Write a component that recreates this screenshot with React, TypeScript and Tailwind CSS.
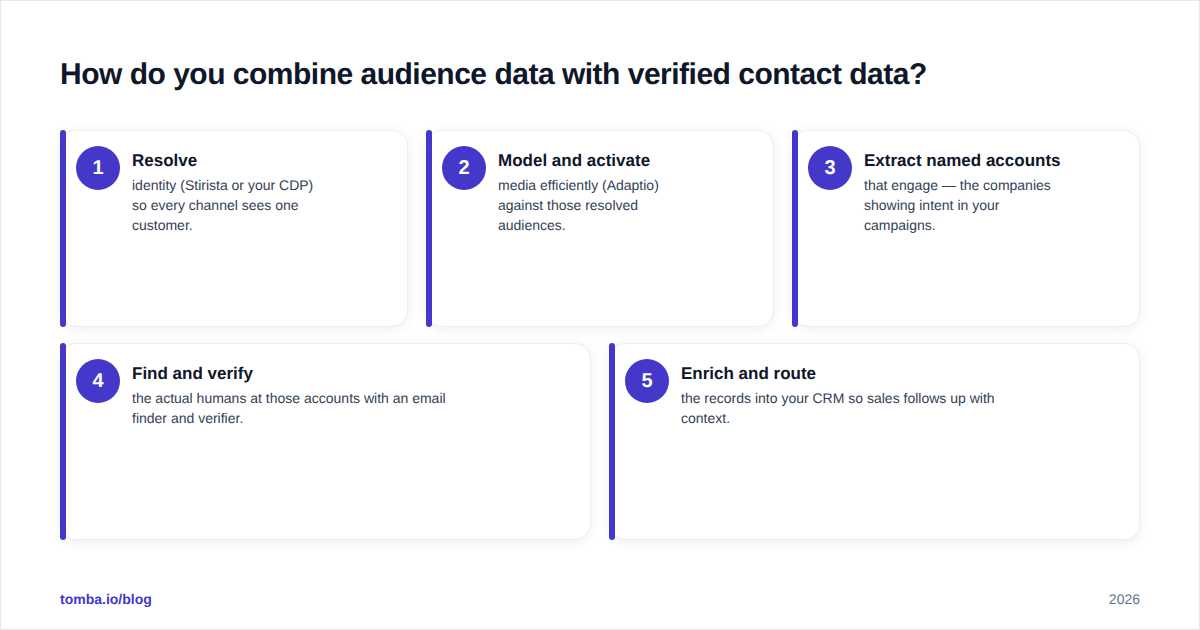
const steps = [
  { n: 1, title: 'Resolve', text: 'identity (Stirista or your CDP) so every channel sees one customer.' },
  { n: 2, title: 'Model and activate', text: 'media efficiently (Adaptio) against those resolved audiences.' },
  { n: 3, title: 'Extract named accounts', text: 'that engage — the companies showing intent in your campaigns.' },
  { n: 4, title: 'Find and verify', text: 'the actual humans at those accounts with an email finder and verifier.' },
  { n: 5, title: 'Enrich and route', text: 'the records into your CRM so sales follows up with context.' },
]

function Card({ n, title, text, wide }: { n: number; title: string; text: string; wide?: boolean }) {
  return (
    <div className="relative flex h-[197px] min-w-0 flex-1 items-start gap-3 rounded-2xl border border-[#eceef2] bg-white p-[15px] shadow-[0_2px_12px_rgba(15,23,42,0.07)]">
      {/* accent bar sits over the card's left edge */}
      <div className="absolute -top-px -bottom-px -left-px w-1.5 rounded-[3px] bg-[#4338ca]" />
      <div className="flex h-11 w-11 shrink-0 items-center justify-center rounded-full bg-[#4338ca] text-xl font-bold text-white">
        {n}
      </div>
      <div>
        <div className="pt-1 pb-[3px] text-[17px] leading-[22px] font-bold text-[#0f172a]">{title}</div>
        <p className={`text-sm leading-5 text-[#334155] ${wide ? 'max-w-[320px]' : 'max-w-[195px]'}`}>{text}</p>
      </div>
    </div>
  )
}

export default function App() {
  return (
    <div className="flex h-[630px] w-[1200px] flex-col border border-[#e5e7eb] bg-white px-[59px] pt-[54px] font-['Liberation_Sans',Arial,sans-serif] [text-rendering:geometricPrecision]">
      <h1 className="text-3xl leading-10 font-bold tracking-[-0.5px] text-[#0f172a]">
        How do you combine audience data with verified contact data?
      </h1>
      <div className="mt-[35px] flex gap-[18px]">
        {steps.slice(0, 3).map((s) => (
          <Card key={s.n} {...s} />
        ))}
      </div>
      <div className="mt-4 flex gap-[18px]">
        {steps.slice(3).map((s) => (
          <Card key={s.n} {...s} wide />
        ))}
      </div>
      <div className="mt-[50px] flex items-center justify-between text-sm leading-[18px]">
        <span className="font-bold text-[#4338ca]">tomba.io/blog</span>
        <span className="text-[#64748b]">2026</span>
      </div>
    </div>
  )
}
